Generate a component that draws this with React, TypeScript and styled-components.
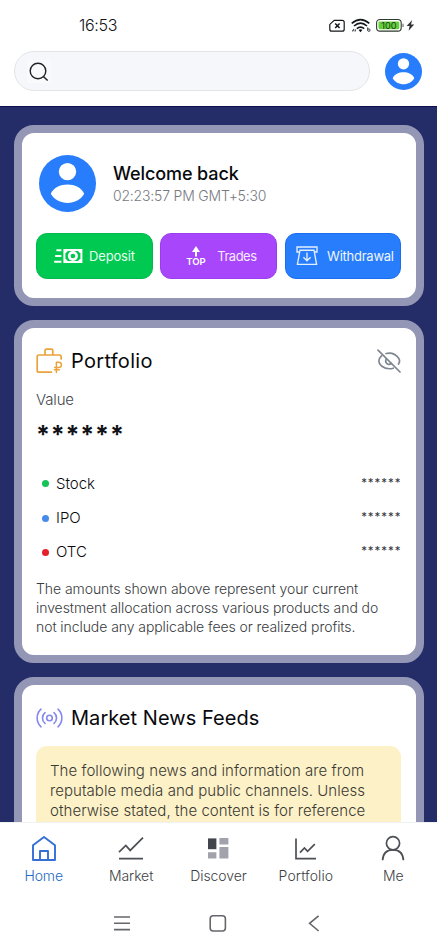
import React from 'react';
import styled, { createGlobalStyle } from 'styled-components';

const GlobalStyle = createGlobalStyle`
  * { box-sizing: border-box; }
  body { margin: 0; background: #fff; font-family: Inter, "Noto Sans", sans-serif; color: #101216; }
  svg { display: block; flex: none; }
`;

const Screen = styled.div`
  width: 438px;
  height: 950px;
  display: flex;
  flex-direction: column;
  overflow: hidden;
  background: #fff;
`;

const Text = styled.span<{ $size: number; $line: number; $weight?: number; $track?: number; $color?: string }>`
  display: block;
  font-size: ${p => p.$size}px;
  line-height: ${p => p.$line}px;
  font-weight: ${p => p.$weight ?? 400};
  letter-spacing: ${p => p.$track ?? 0}px;
  color: ${p => p.$color ?? '#101216'};
  white-space: nowrap;
`;

const StatusBar = styled.div`
  height: 51px;
  flex: none;
  display: flex;
  justify-content: space-between;
  padding: 15px 23px 0 79px;
`;

const StatusIcons = styled.div`
  display: flex;
  height: 21px;
  align-items: center;
`;

const Header = styled.header`
  height: 56px;
  flex: none;
  display: flex;
  align-items: flex-start;
  justify-content: space-between;
  margin-right: 1px;
  padding: 0 15px 0 14px;
  border-bottom: 1px solid #0d1152;
`;

const SearchBox = styled.div`
  width: 356px;
  height: 40px;
  border: 1px solid #e2e4e7;
  border-radius: 20px;
  background: #f5f7fa;
  padding: 8px 0 0 12px;
`;

const SearchIconPatch = styled.div`
  width: 24px;
  height: 23px;
  border-radius: 2px;
  background: #f9fafc;
  display: grid;
  place-items: center;
`;

const HeaderAvatar = styled.div`
  padding-top: 2px;
`;

const Feed = styled.main`
  height: 715px;
  flex: none;
  overflow: hidden;
  display: flex;
  flex-direction: column;
  gap: 14px;
  margin-right: 1px;
  padding: 18px 13px 0 14px;
  background: #252d69;
`;

const Card = styled.section<{ $height: number }>`
  height: ${p => p.$height}px;
  flex: none;
  border: 8px solid #9496b6;
  border-radius: 20px;
  background: #fff;
  padding: 0 14.6px 0 14px;
`;

const Profile = styled.div`
  display: flex;
  gap: 17px;
  padding: 22px 0 0 3px;
`;

const ProfileText = styled.div`
  padding-top: 8px;
`;

const Actions = styled.div`
  display: grid;
  grid-template-columns: repeat(3, 1fr);
  gap: 7.5px;
  margin-top: 21px;
`;

const ActionButton = styled.button<{ $bg: string; $edge: string; $gap: number; $left: number }>`
  height: 46px;
  display: flex;
  align-items: center;
  gap: ${p => p.$gap}px;
  padding: 0 0 0 ${p => p.$left}px;
  border: 1px solid ${p => p.$edge};
  border-radius: 11px;
  background: ${p => p.$bg};
  font-family: inherit;
`;

const CardHeader = styled.div`
  display: flex;
  align-items: center;
  height: 34px;
  margin-top: 16px;
  gap: 8px;
`;

const Spacer = styled.div`
  flex: 1;
`;

const ValueBlock = styled.div`
  padding-top: 11px;
`;

const Masked = styled.div<{ $large?: boolean }>`
  font-size: ${p => (p.$large ? 25 : 11.5)}px;
  font-weight: ${p => (p.$large ? 700 : 400)};
  line-height: ${p => (p.$large ? 28 : 20)}px;
  letter-spacing: ${p => (p.$large ? 0.8 : 0.95)}px;
  height: ${p => (p.$large ? 28 : 22)}px;
  color: ${p => (p.$large ? '#101216' : '#33363b')};
  margin-top: ${p => (p.$large ? 11 : 0)}px;
`;

const Allocations = styled.div`
  margin-top: 17.6px;
`;

const Allocation = styled.div`
  height: 34.3px;
  display: flex;
  align-items: center;
  padding-left: 6px;
`;

const Dot = styled.i<{ $color: string }>`
  width: 7px;
  height: 7px;
  border-radius: 50%;
  background: ${p => p.$color};
  margin-right: 7px;
`;

const Disclaimer = styled.div`
  padding-top: 10.6px;
`;

const Notice = styled.div`
  height: 160px;
  margin-top: 10.5px;
  padding: 15px 14px 0;
  border-radius: 11px;
  background: #fdf1c7;
`;

const TabBar = styled.nav`
  height: 74px;
  flex: none;
  display: grid;
  grid-template-columns: repeat(5, 1fr);
  margin-right: 1px;
  border-top: 1px solid #f0f1f3;
`;

const Tab = styled.div`
  display: flex;
  flex-direction: column;
  align-items: center;
  padding-top: 12px;
  gap: 3px;
`;

const SystemBar = styled.div`
  flex: 1;
  display: flex;
  justify-content: center;
  align-items: flex-start;
  gap: 76px;
  padding: 17px 3px 0 0;
`;

const UserBadge = ({ size }: { size: number }) => (
  <svg width={size} height={size} viewBox="0 0 57 57">
    <circle cx="28.5" cy="28.5" r="28.5" fill="#277dfb" />
    <circle cx="28.5" cy="16.6" r="8.7" fill="#fff" />
    <path d="M11.8 38.8C14.6 32.4 21.4 29.5 28.5 29.5S42.4 32.4 45.2 38.8C42 44.8 35.4 48 28.5 48S15 44.8 11.8 38.8Z" fill="#fff" />
  </svg>
);

const StatusGlyphs = () => (
  <svg width="86" height="21" viewBox="0 0 86 21" fill="none">
    <path d="M5.2 5.3H13.2Q15.2 5.3 15.2 7.3V14.2Q15.2 16.2 13.2 16.2H2.7Q.8 16.2.8 14.2V9.4Z" stroke="#15171a" strokeWidth="1.2" />
    <path d="M6.2 8.4 10.6 13M10.6 8.4 6.2 13" stroke="#15171a" strokeWidth="1.5" />
    <path d="M22.7 8.3Q31.5.8 40.3 8.3M25 11Q31.5 5.3 38 11M27.8 13.6Q31.5 10.5 35.2 13.6" stroke="#15171a" strokeWidth="1.6" />
    <path d="M29.6 14.9Q31.5 13.8 33.4 14.9L31.5 17.2Z" fill="#15171a" />
    <path d="M23.4 16.4 25 14.2M25.8 16.4 26.8 14.4" stroke="#44484c" strokeWidth="1.2" />
    <path d="M38.7 12.4V15.6M38.7 14H40.2Q41 14 41 15V15.4Q41 16.3 40 16.3H39.6Q38.7 16.3 38.7 15.4" stroke="#33363b" />
    <rect x="47.6" y="4.5" width="24.6" height="11.6" rx="3.4" stroke="#2c3a2c" strokeWidth="1.1" />
    <rect x="49.5" y="6.4" width="20.8" height="7.8" rx="1.4" fill="#64cf3c" />
    <text x="60" y="13.7" textAnchor="middle" fontFamily="Inter, sans-serif" fontSize="9.2" fontWeight="400" fill="#1d4218">100</text>
    <path d="M74 8.7V12" stroke="#8b8f8b" strokeWidth="1.5" />
    <path d="M83.2 5 77.6 11H80.6L79.6 15.8 85.2 9.5H82Z" fill="#303236" />
  </svg>
);

const SearchIcon = () => (
  <svg width="20" height="20" viewBox="0 0 20 20" fill="none" stroke="#202327" strokeWidth="1.4">
    <circle cx="9" cy="9" r="7.8" />
    <path d="M14.4 14.4 18.6 18.6" />
  </svg>
);

const DepositIcon = () => (
  <svg width="29" height="16" viewBox="0 0 29 16" fill="none">
    <path d="M2.4 2.2H7.4M1.2 8H7.4M.2 13.8H7.4" stroke="#fff" strokeWidth="2" />
    <rect x="9.4" y="1" width="19" height="14" fill="#fff" />
    <path d="M11.4 5.6 13.8 3H24L26.4 5.6V10.4L24 13H13.8L11.4 10.4Z" fill="#00c951" />
    <ellipse cx="18.9" cy="8" rx="5" ry="5" fill="#fff" />
    <circle cx="18.9" cy="8" r="2.3" fill="#00c951" />
  </svg>
);

const TradesIcon = () => (
  <svg width="20" height="20" viewBox="0 0 20 20">
    <path d="M10 0 14 6H11V10.6H9V6H6Z" fill="#fff" />
    <text x="10" y="19" textAnchor="middle" fontFamily="Inter, sans-serif" fontSize="9.6" fontWeight="600" fill="#fff">TOP</text>
  </svg>
);

const WithdrawIcon = () => (
  <svg width="22" height="20" viewBox="0 0 22 20" fill="none" stroke="#e3efff" strokeWidth="1.35">
    <path d="M3.6 6H1V1H21V6H18.4M4 4.2H18L20.6 18.4H1.4Z" />
    <path d="M11 6.4V14.6M7.4 11.2 11 14.8 14.6 11.2" />
  </svg>
);

const BriefcaseIcon = () => (
  <svg width="27" height="26" viewBox="0 0 27 26" fill="none" stroke="#eba33c" strokeWidth="1.7" strokeLinecap="round" strokeLinejoin="round">
    <path d="M9 6.6V2.6Q9 1.2 10.4 1.2H15.4Q16.8 1.2 16.8 2.6V6.6M15.4 24.2H3Q1.2 24.2 1.2 22.4V8.8Q1.2 7 3 7H23.4Q25.2 7 25.2 8.8V11" />
    <path d="M20.4 24.4V14.2H22.8Q25.4 14.2 25.4 16.8T22.8 19.4H18.6M18.4 21.8H23.4" strokeWidth="1.5" />
  </svg>
);

const HiddenIcon = () => (
  <svg width="24" height="24" viewBox="0 0 24 24" fill="none" stroke="#7d8691" strokeWidth="1.7" strokeLinecap="round">
    <path d="M1 1.2 23 23" />
    <path d="M9.1 4.5Q16.8 2.7 21.5 9Q23.6 12 21.5 15.1M4.5 6.9Q-.8 12 4.5 17Q9.8 21 16.2 19.2" />
    <path d="M9.2 10.2Q7.7 13.8 10.9 15.3Q12.9 15.8 14.4 14.5" />
  </svg>
);

const BroadcastIcon = () => (
  <svg width="27" height="20" viewBox="0 0 27 20" fill="none" stroke="#8588ee" strokeWidth="1.6" strokeLinecap="round">
    <circle cx="13.5" cy="10" r="2.8" />
    <path d="M9 4.6A7 7 0 0 0 9 15.4M18 4.6A7 7 0 0 1 18 15.4M5 1.2A12 12 0 0 0 5 18.8M22 1.2A12 12 0 0 1 22 18.8" />
  </svg>
);

const tabs = [
  {
    label: 'Home', color: '#236bc4', track: -0.1,
    icon: <g stroke="#356fd5" strokeWidth="1.9" strokeLinejoin="round"><path d="M3 10.2 14 2 25 10.2V25H3Z" /><path d="M10 25V16H18V25" /></g>,
  },
  {
    label: 'Market', color: '#3c3f44', track: -0.1,
    icon: <path d="M2 17.2 8.8 10.5 13.2 15.4 26 2.6M2 23.6H26" stroke="#4c4f54" strokeWidth="1.7" />,
  },
  {
    label: 'Discover', color: '#3c3f44', track: -0.1,
    icon: <><path d="M4 3.4H12.4V14.2H4Z" fill="#42444b" /><path d="M4 17.2H12.4V23.6H4ZM15.4 3H24.4V9.4H15.4ZM15.4 12H24.4V23.6H15.4Z" fill="#a0a3ab" /></>,
  },
  {
    label: 'Portfolio', color: '#3c3f44', track: 0.1,
    icon: <path d="M4 3.6V23.6H24M8 17.6 12.4 13 15.6 16.4 22.8 9.2" stroke="#4c4f54" strokeWidth="1.7" />,
  },
  {
    label: 'Me', color: '#3c3f44', track: 0,
    icon: <g stroke="#4c4f54" strokeWidth="1.7"><circle cx="14" cy="8.2" r="6.6" /><path d="M3.6 25.2Q4.2 14.8 14 14.8T24.4 25.2" /></g>,
  },
];

const allocations = [
  { name: 'Stock', color: '#17c257' },
  { name: 'IPO', color: '#448bea' },
  { name: 'OTC', color: '#e5202b' },
];

const disclaimer = [
  'The amounts shown above represent your current',
  'investment allocation across various products and do',
  'not include any applicable fees or realized profits.',
];

const notice = [
  'The following news and information are from',
  'reputable media and public channels. Unless',
  'otherwise stated, the content is for reference',
];

export default function App() {
  return (
    <Screen>
      <GlobalStyle />
      <StatusBar>
        <Text $size={16} $line={21} $weight={300} $track={-0.3}>16:53</Text>
        <StatusIcons><StatusGlyphs /></StatusIcons>
      </StatusBar>
      <Header>
        <SearchBox><SearchIconPatch><SearchIcon /></SearchIconPatch></SearchBox>
        <HeaderAvatar><UserBadge size={37} /></HeaderAvatar>
      </Header>
      <Feed>
        <Card $height={181}>
          <Profile>
            <UserBadge size={57} />
            <ProfileText>
              <Text $size={18} $line={22} $weight={500} $track={-0.1} $color="#08090c">Welcome back</Text>
              <Text $size={14} $line={21} $weight={300} $track={-0.19} $color="#777a80">02:23:57 PM GMT+5:30</Text>
            </ProfileText>
          </Profile>
          <Actions>
            <ActionButton $bg="#00c951" $edge="#05b84c" $left={17} $gap={6}>
              <DepositIcon /><Text $size={13} $line={18} $track={-0.15} $color="#e4ffee">Deposit</Text>
            </ActionButton>
            <ActionButton $bg="#a846fb" $edge="#9b3cf0" $left={24.5} $gap={11.5}>
              <TradesIcon /><Text $size={13} $line={18} $track={-0.5} $color="#f7e8ff">Trades</Text>
            </ActionButton>
            <ActionButton $bg="#277dfb" $edge="#1a6eee" $left={10} $gap={9.5}>
              <WithdrawIcon /><Text $size={13} $line={18} $track={-0.25} $color="#eef5ff">Withdrawal</Text>
            </ActionButton>
          </Actions>
        </Card>
        <Card $height={343}>
          <CardHeader>
            <BriefcaseIcon />
            <Text $size={20} $line={28} $track={0.3} $color="#08090c">Portfolio</Text>
            <Spacer />
            <HiddenIcon />
          </CardHeader>
          <ValueBlock>
            <Text $size={15} $line={21} $weight={300} $track={-0.15} $color="#44474c">Value</Text>
            <Masked $large>******</Masked>
          </ValueBlock>
          <Allocations>
            {allocations.map(a => (
              <Allocation key={a.name}>
                <Dot $color={a.color} />
                <Text $size={15} $line={20} $weight={300} $color="#08090c">{a.name}</Text>
                <Spacer />
                <Masked>******</Masked>
              </Allocation>
            ))}
          </Allocations>
          <Disclaimer>
            {disclaimer.map(t => <Text key={t} $size={14} $line={18.75} $weight={300} $track={-0.07} $color="#383b40">{t}</Text>)}
          </Disclaimer>
        </Card>
        <Card $height={300}>
          <CardHeader>
            <BroadcastIcon />
            <Text $size={20} $line={28} $track={0.05} $color="#08090c">Market News Feeds</Text>
          </CardHeader>
          <Notice>
            {notice.map(t => <Text key={t} $size={15} $line={20.4} $weight={300} $track={0.06} $color="#3a3933">{t}</Text>)}
          </Notice>
        </Card>
      </Feed>
      <TabBar>
        {tabs.map(t => (
          <Tab key={t.label}>
            <svg width="28" height="28" viewBox="0 0 28 28" fill="none">{t.icon}</svg>
            <Text $size={14} $line={20} $weight={300} $track={t.track} $color={t.color}>{t.label}</Text>
          </Tab>
        ))}
      </TabBar>
      <SystemBar>
        <svg width="20" height="20" viewBox="0 0 20 20" fill="none" stroke="#65676b" strokeWidth="1.6"><path d="M2 4H18M2 10.3H18M2 16.6H18" /></svg>
        <svg width="20" height="20" viewBox="0 0 20 20" fill="none" stroke="#65676b" strokeWidth="1.6"><rect x="2.2" y="2.8" width="15.2" height="15.2" rx="3" /></svg>
        <svg width="20" height="20" viewBox="0 0 20 20" fill="none" stroke="#65676b" strokeWidth="1.6"><path d="M14.6 2.8 5.6 10.3 14.6 18" /></svg>
      </SystemBar>
    </Screen>
  );
}
